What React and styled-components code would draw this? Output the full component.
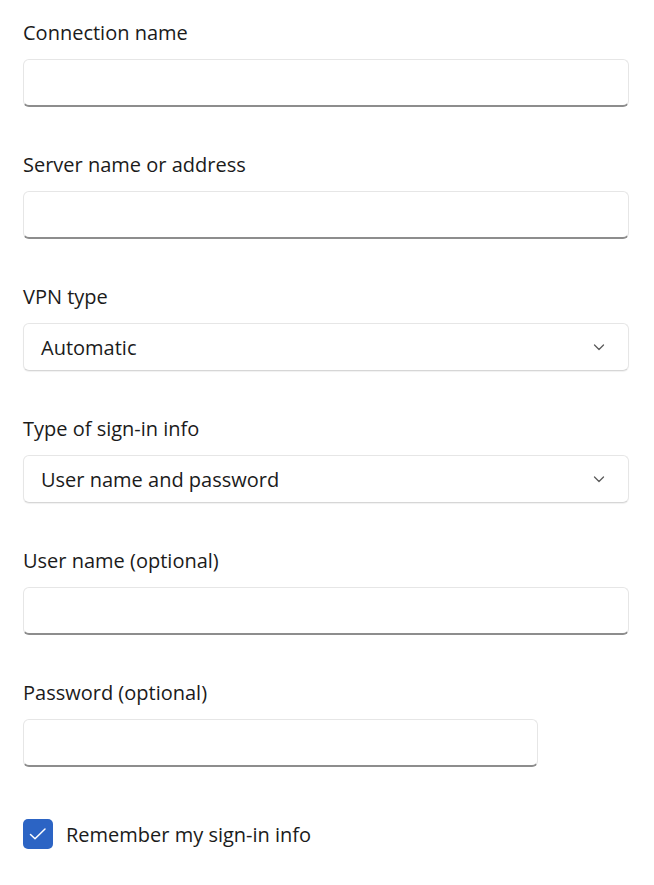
import React from 'react';
import styled, { createGlobalStyle } from 'styled-components';

const GlobalStyle = createGlobalStyle`
    body {
        margin: 0;
        background: #fff;
        font-family: 'Open Sans', 'Noto Sans', sans-serif;
        color: #1b1b1b;
    }
`;

const fields = [
    { label: 'Connection name', kind: 'text' },
    { label: 'Server name or address', kind: 'text' },
    { label: 'VPN type', kind: 'select', value: 'Automatic' },
    { label: 'Type of sign-in info', kind: 'select', value: 'User name and password' },
    { label: 'User name (optional)', kind: 'text' },
    { label: 'Password (optional)', kind: 'text', narrow: true },
];

const Chevron = () => (
    <svg width="14" height="14" viewBox="0 0 14 14" fill="none">
        <path d="M2.5 5l4.5 4.5L11.5 5" stroke="#5c5c5c" strokeWidth="1.3" strokeLinecap="round" strokeLinejoin="round" />
    </svg>
);

const App = () => (
    <>
        <GlobalStyle />
        <Form>
            {fields.map((f) => (
                <Group key={f.label}>
                    <Label>{f.label}</Label>
                    {f.kind === 'select' ? (
                        <Select>
                            <span>{f.value}</span>
                            <Chevron />
                        </Select>
                    ) : (
                        <TextBox $narrow={f.narrow} />
                    )}
                </Group>
            ))}
            <CheckRow>
                <CheckBox>
                    <svg width="20" height="20" viewBox="0 0 20 20" fill="none">
                        <path d="M2.5 10.5l4.5 4.3L17 5" stroke="#fff" strokeWidth="1.5" strokeLinecap="round" strokeLinejoin="round" />
                    </svg>
                </CheckBox>
                <CheckLabel>Remember my sign-in info</CheckLabel>
            </CheckRow>
        </Form>
    </>
);

export default App;

const Form = styled.div`
    display: flex;
    flex-direction: column;
    gap: 44px;
    padding: 19px 25px 0 23px;
`;

const Group = styled.div`
    display: flex;
    flex-direction: column;
    gap: 12px;
`;

const Label = styled.div`
    font-size: 20px;
    line-height: 28px;
    color: #1b1b1b;
`;

const TextBox = styled.div`
    box-sizing: border-box;
    height: 48px;
    width: ${(p) => (p.$narrow ? '515px' : '606px')};
    background: #fff;
    border: 1px solid #e6e6e6;
    border-bottom: 2px solid #8d8d8d;
    border-radius: 6px;
`;

const Select = styled.div`
    box-sizing: border-box;
    height: 48px;
    width: 606px;
    display: flex;
    align-items: center;
    justify-content: space-between;
    padding: 0 22px 0 17px;
    background: #fff;
    border: 1px solid #e6e6e6;
    border-bottom-color: #d6d6d6;
    border-radius: 6px;
    box-shadow: 0 1px 1px rgba(0, 0, 0, 0.06);
    font-size: 20px;
    color: #1b1b1b;
`;

const CheckRow = styled.div`
    display: flex;
    align-items: center;
    gap: 13px;
    margin-top: 8px;
`;

const CheckBox = styled.div`
    width: 30px;
    height: 30px;
    border-radius: 5px;
    background: #2c64c4;
    display: flex;
    align-items: center;
    justify-content: center;
`;

const CheckLabel = styled.span`
    font-size: 20px;
    color: #1b1b1b;
`;
